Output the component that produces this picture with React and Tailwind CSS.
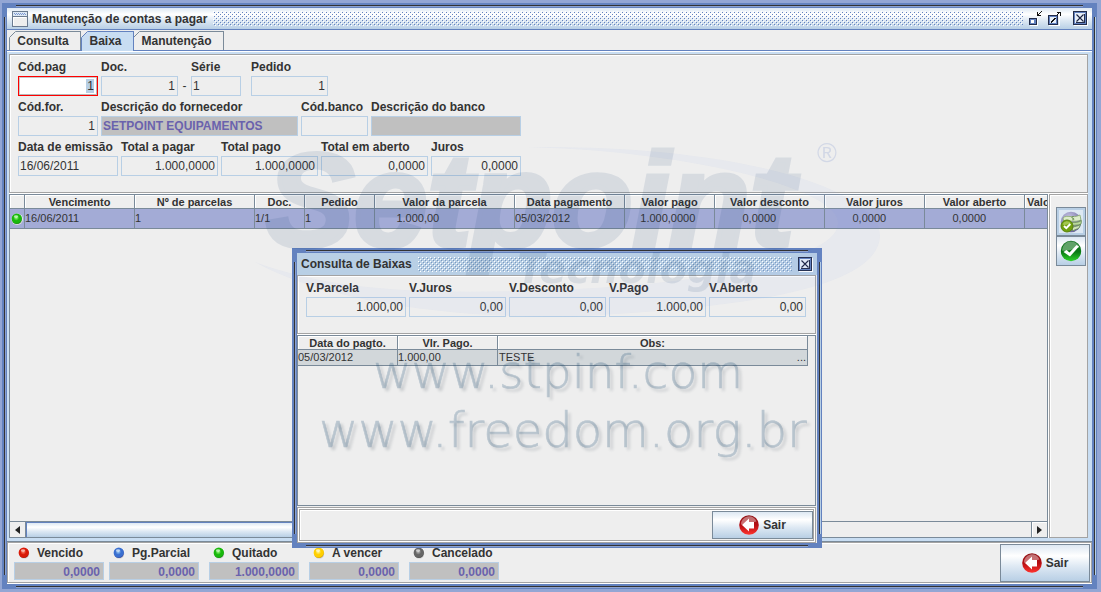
import { useId } from "react";

const OCEAN =
  "bg-[linear-gradient(to_bottom,#dde8f3_0%,#ffffff_30%,#dde8f3_60%,#b8cfe5_100%)]";

function Frame({ className = "", children }) {
  return (
    <div className={"relative flex flex-col bg-[#6382bf] p-[5px] " + className}>
      <span className="absolute top-0.5 right-3.5 left-3.5 h-px bg-[#333333] shadow-[0_1px_#8ea3cf]" />
      <span className="absolute right-3.5 bottom-0.5 left-3.5 h-px bg-[#333333] shadow-[0_1px_#8ea3cf]" />
      <span className="absolute top-3.5 bottom-3.5 left-0.5 w-px bg-[#333333] shadow-[1px_0_#8ea3cf]" />
      <span className="absolute top-3.5 right-0.5 bottom-3.5 w-px bg-[#333333] shadow-[1px_0_#b8cfe5]" />
      {children}
    </div>
  );
}

function Bumps({ dark, light }) {
  const id = useId();
  return (
    <svg className="h-[15px] min-w-0 flex-1" shapeRendering="crispEdges" aria-hidden="true">
      <defs>
        <pattern id={id} width="4" height="4" patternUnits="userSpaceOnUse">
          <rect x="0" y="0" width="1" height="1" fill={light} />
          <rect x="2" y="2" width="1" height="1" fill={light} />
          <rect x="1" y="1" width="1" height="1" fill={dark} />
          <rect x="3" y="3" width="1" height="1" fill={dark} />
        </pattern>
      </defs>
      <rect width="100%" height="100%" fill={`url(#${id})`} />
    </svg>
  );
}

function CloseIcon() {
  return (
    <svg width="15" height="15" viewBox="0 0 15 15" shapeRendering="crispEdges">
      <path d="M1 14.5H14.5V1" fill="none" stroke="#fff" />
      <rect x="0.5" y="0.5" width="13" height="13" fill="none" stroke="#222c4a" />
      <rect x="1.5" y="1.5" width="11" height="11" fill="#e6eef8" stroke="#6382bf" />
      <path d="M3 11.5H11.5V3" fill="none" stroke="#222c4a" />
      <path d="M3.500 3.500L10.500 10.500M10.500 3.500L3.500 10.500" stroke="#1b2340" strokeWidth="1.1" shapeRendering="auto" />
    </svg>
  );
}

function MinimizeIcon() {
  return (
    <svg width="15" height="15" viewBox="0 0 15 15" shapeRendering="crispEdges">
      <path d="M1 14.5H8.5V7" fill="none" stroke="#fff" />
      <rect x="0" y="7" width="8" height="7" fill="#222c4a" />
      <rect x="1" y="8" width="6" height="5" fill="#6382bf" />
      <rect x="2" y="9" width="3" height="3" fill="#fff" />
      <path d="M8.500 1V4.500H12" fill="none" stroke="#111" />
      <path d="M9 4L13 0" stroke="#111" />
    </svg>
  );
}

function MaximizeIcon() {
  return (
    <svg width="15" height="15" viewBox="0 0 15 15" shapeRendering="crispEdges">
      <path d="M1 14.5H11.5V4" fill="none" stroke="#fff" />
      <rect x="0.5" y="4.5" width="9" height="9" fill="#e6eef8" stroke="#222c4a" />
      <rect x="1.5" y="5.5" width="7" height="7" fill="none" stroke="#6382bf" />
      <path d="M3 11.500L7.500 7M9 4L12 1" stroke="#111" />
      <path d="M9 1.500H12.500V5" fill="none" stroke="#111" />
    </svg>
  );
}

function WindowIcon() {
  return (
    <svg width="16" height="16" viewBox="0 0 16 16" shapeRendering="crispEdges" aria-hidden="true">
      <rect x="0.5" y="0.5" width="15" height="15" rx="1" fill="#eeeeee" stroke="#6b7b90" />
      <rect x="1" y="1" width="14" height="4" fill="#dde8f3" />
      <path d="M2 2.5H14M3 3.5H14" stroke="#7c98d4" strokeDasharray="1 1" />
      <path d="M1 5.5H15" stroke="#6b7b90" />
      <path d="M1.5 14V6.5H14" fill="none" stroke="#fff" />
    </svg>
  );
}

function ExitIcon() {
  const id = useId();
  return (
    <svg width="20" height="20" viewBox="0 0 20 20" aria-hidden="true">
      <defs>
        <linearGradient id={id} x1="0" y1="0" x2="0" y2="1">
          <stop offset="0" stopColor="#8e1519" />
          <stop offset="0.5" stopColor="#b50d12" />
          <stop offset="1" stopColor="#ff3530" />
        </linearGradient>
      </defs>
      <circle cx="10" cy="10" r="9.8" fill={`url(#${id})`} />
      <path d="M2 9.5A8 8 0 0 1 17.5 6.5C12 7 8 10.500 2 9.500Z" fill="#fff" opacity="0.4" />
      <path d="M3 10L10 3.500V7H15V13.500H10V16.500Z" fill="#fff" />
    </svg>
  );
}

function CheckIcon() {
  const id = useId();
  return (
    <svg width="22" height="22" viewBox="0 0 22 22" aria-hidden="true">
      <defs>
        <linearGradient id={id} x1="0" y1="0" x2="0" y2="1">
          <stop offset="0" stopColor="#0b6b1b" />
          <stop offset="0.55" stopColor="#0a7a14" />
          <stop offset="1" stopColor="#2fd42a" />
        </linearGradient>
      </defs>
      <circle cx="11" cy="11" r="10.200" fill={`url(#${id})`} />
      <path d="M2 10.500A9 9 0 0 1 19.500 7.500C13 8 9 12 2 10.500Z" fill="#fff" opacity="0.35" />
      <path d="M3.500 12L6.500 10L9.500 12.500L16.500 5L19 6.500L10 16.500Z" fill="#fff" />
    </svg>
  );
}

function MoneyIcon() {
  const id = useId();
  return (
    <svg width="22" height="22" viewBox="0 0 22 22" aria-hidden="true">
      <defs>
        <radialGradient id={id} cx="0.4" cy="0.3" r="0.8">
          <stop offset="0" stopColor="#c9c7e6" />
          <stop offset="1" stopColor="#5f5b94" />
        </radialGradient>
      </defs>
      <circle cx="11" cy="11" r="10.300" fill={`url(#${id})`} />
      <path d="M3 7C7 3 12 8 20 4L21 9C14 12 9 8 4 12Z" fill="#dcecc9" stroke="#7da05e" strokeWidth="0.700" />
      <path d="M9 13C13 10 16 13 21.500 9.500L21 13C17 15 14 13 11 16Z" fill="#b9d79c" stroke="#5f8846" strokeWidth="0.700" />
      <path d="M12 17C15 14.500 17 16 20.500 13.500L19 17C17 18.500 15 18 13 20Z" fill="#cfe2ba" stroke="#5f8846" strokeWidth="0.700" />
      <path d="M13.500 5.500C11.500 5.500 11.500 7.200 13 7.400C14.600 7.600 14.300 9 12.300 8.800" fill="none" stroke="#5f8846" />
      <circle cx="7" cy="15" r="6" fill="#6fa00e" stroke="#5a8410" />
      <path d="M2.500 13.500A4.700 4.700 0 0 1 11 12.500C8 12.500 6 15 2.500 13.500Z" fill="#c6e07a" opacity="0.6" />
      <path d="M4 15L6.300 17.200L10.300 13" fill="none" stroke="#fff" strokeWidth="2" />
    </svg>
  );
}

const BALLS = {
  red: ["#ff8a70", "#d91a08", "#7a0c04"],
  blue: ["#9fd0f5", "#3a6fd0", "#28206e"],
  green: ["#9dff80", "#19b80c", "#07560a"],
  yellow: ["#fff9a0", "#ffcf00", "#a87300"],
  gray: ["#bdbdbd", "#666666", "#333333"],
};

function Ball({ color }) {
  const id = useId();
  const [a, b, c] = BALLS[color];
  return (
    <svg width="12" height="12" viewBox="0 0 12 12" className="shrink-0" aria-hidden="true">
      <defs>
        <radialGradient id={id} cx="0.45" cy="0.4" r="0.7">
          <stop offset="0" stopColor={a} />
          <stop offset="0.4" stopColor={b} />
          <stop offset="0.7" stopColor={b} />
          <stop offset="1" stopColor={c} />
        </radialGradient>
      </defs>
      <circle cx="6.200" cy="6.300" r="5.700" fill="#fff" />
      <circle cx="6.200" cy="6.500" r="5.300" fill="#000" opacity="0.18" />
      <circle cx="5.800" cy="5.800" r="5.200" fill={`url(#${id})`} />
      <ellipse cx="5" cy="3.500" rx="2.200" ry="1.300" fill="#fff" opacity="0.55" />
    </svg>
  );
}

const FIELD = "h-5 w-full border border-[#b8cfe5] pr-0.5 pl-px outline-none ";

function Field({ label, value = "", width, align = "text-right", kind = "plain" }) {
  const id = useId();
  const kinds = {
    plain: "bg-[#eeeeee] text-[#333333]",
    shown: "bg-[#c0c0c0] font-bold text-[#6a62ad]",
    active:
      "border-[#ff0000] bg-white bg-[linear-gradient(#b8cfe5,#b8cfe5)] bg-[length:8px_14px] bg-[position:right_3px_center] bg-no-repeat pr-[3px] text-[#333333] shadow-[inset_-1px_-1px_#b8b8b8,inset_1px_1px_#c8c8c8]",
  };
  return (
    <div className={"shrink-0 " + width}>
      <label htmlFor={id} className="block h-5 pt-px leading-5 font-bold whitespace-nowrap">
        {label}
      </label>
      <input
        id={id}
        defaultValue={value}
        readOnly={kind !== "active"}
        className={"block " + FIELD + align + " " + kinds[kind]}
      />
    </div>
  );
}

function Tab({ label, width, selected }) {
  return (
    <button
      type="button"
      role="tab"
      aria-selected={!!selected}
      className={
        "relative border-t border-r pr-1 font-bold leading-4 " +
        width +
        (selected
          ? " z-10 -mb-px h-5 border-l border-[#6382bf] bg-[#c8ddf2] pb-0.5"
          : " h-[19px] border-[#7a8a99] bg-[#eeeeee] first:border-l")
      }
    >
      <svg width="7" height="7" viewBox="0 0 7 7" className="absolute -top-px -left-px" aria-hidden="true">
        <path d="M0 0H7L0 7Z" fill="#eeeeee" />
        <path d="M0.500 6.500L6.500 0.500" stroke={selected ? "#6382bf" : "#7a8a99"} />
      </svg>
      {label}
    </button>
  );
}

const TH =
  "h-3.5 overflow-hidden border-r border-b border-[#7a8a99] bg-[#eeeeee] p-0 pt-px text-center leading-3 font-bold text-clip whitespace-nowrap shadow-[inset_1px_1px_#ffffff] ";
const TD = "overflow-hidden border-r border-b border-[#7a8a99] p-0 whitespace-pre ";

const COLUMNS = [
  ["w-[15px]", "", ""],
  ["w-[110px]", "Vencimento", "16/06/2011"],
  ["w-[120px]", "Nº de parcelas", "1"],
  ["w-[50px]", "Doc.", "1/1"],
  ["w-[70px]", "Pedido", "1"],
  ["w-[140px]", "Valor da parcela", "1.000,00".padStart(15)],
  ["w-[110px]", "Data pagamento", "05/03/2012"],
  ["w-[90px]", "Valor pago", "1.000,0000".padStart(15)],
  ["w-[110px]", "Valor desconto", "0,0000".padStart(15)],
  ["w-[100px]", "Valor juros", "0,0000".padStart(15)],
  ["w-[100px]", "Valor aberto", "0,0000".padStart(15)],
];

function PaymentsTable() {
  return (
    <table className="w-full table-fixed border-separate border-spacing-0 text-[11px]">
      <thead>
        <tr>
          {COLUMNS.map(([w, title], i) => (
            <th key={i} className={TH + w}>
              {title}
            </th>
          ))}
          <th className="h-3.5 overflow-hidden border-b border-[#7a8a99] p-0 pt-px pl-0.5 text-left leading-3 whitespace-nowrap shadow-[inset_1px_1px_#ffffff]">
            Valor cancelado
          </th>
        </tr>
      </thead>
      <tbody>
        <tr className="bg-[#a3abd6]">
          {COLUMNS.map(([, , value], i) => (
            <td key={i} className={TD + (i === 0 ? "h-5" : "h-5 pb-0.5 leading-4")}>
              {i === 0 ? (
                <span className="flex justify-center">
                  <Ball color="green" />
                </span>
              ) : (
                value
              )}
            </td>
          ))}
          <td className="border-b border-[#7a8a99] p-0" />
        </tr>
      </tbody>
    </table>
  );
}

function ScrollBar() {
  return (
    <div className="flex h-4 border-t border-[#7a8a99] bg-[#eeeeee]">
      <button type="button" aria-label="Rolar para a esquerda" className="flex w-4 items-center justify-center border-r border-[#7a8a99]">
        <svg width="5" height="8" viewBox="0 0 5 8"><path d="M5 0V8L0 4Z" fill="#222" /></svg>
      </button>
      <div className="flex-1">
        <div className={"h-full w-3/4 border-x border-t border-[#6382bf] " + OCEAN} />
      </div>
      <button type="button" aria-label="Rolar para a direita" className="flex w-4 items-center justify-center border-l border-[#7a8a99] shadow-[inset_1px_1px_#ffffff]">
        <svg width="5" height="8" viewBox="0 0 5 8"><path d="M0 0V8L5 4Z" fill="#222" /></svg>
      </button>
    </div>
  );
}

function ExitButton({ className }) {
  return (
    <button
      type="button"
      className={"flex items-center justify-center gap-1 border border-[#7a8a99] font-bold " + OCEAN + " " + className}
    >
      <ExitIcon />
      Sair
    </button>
  );
}

function Legend({ color, label, value, className = "" }) {
  const id = useId();
  return (
    <div className={"w-[90px] shrink-0 " + className}>
      <label htmlFor={id} className="flex h-[18px] items-center gap-[7px] pl-1 font-bold whitespace-nowrap">
        <Ball color={color} />
        {label}
      </label>
      <input
        id={id}
        readOnly
        defaultValue={value}
        className="block h-[18px] w-full border border-[#b8cfe5] bg-[#c0c0c0] pt-px pr-[3px] pl-px text-right font-bold text-[#6a62ad] outline-none"
      />
    </div>
  );
}

function PaymentDialog() {
  return (
    <div role="dialog" aria-label="Consulta de Baixas" className="absolute top-[248px] left-[292px] flex h-[300px] w-[530px]">
      <Frame className="flex-1">
        <div className="flex h-[22px] items-center bg-[#b8cfe5] pr-1 pl-1">
          <h2 className="mr-1.5 font-bold">Consulta de Baixas</h2>
          <Bumps dark="#7a9ac0" light="#ffffff" />
          <button type="button" aria-label="Fechar" className="ml-1.5">
            <CloseIcon />
          </button>
        </div>
        <div className="flex min-h-0 flex-1 flex-col bg-[#eeeeee] pr-px">
          <div className="flex gap-[3px] border border-[#a3a3a3] pt-px pb-4 pl-2 shadow-[inset_1px_1px_#ffffff,0_1px_#ffffff]">
            <Field label="V.Parcela" value="1.000,00" width="w-[100px]" />
            <Field label="V.Juros" value="0,00" width="w-[97px]" />
            <Field label="V.Desconto" value="0,00" width="w-[97px]" />
            <Field label="V.Pago" value="1.000,00" width="w-[97px]" />
            <Field label="V.Aberto" value="0,00" width="w-[97px]" />
          </div>
          <div className="mt-px flex-1 border border-[#7a8a99] pr-[7px]">
            <table className="w-full table-fixed border-separate border-spacing-0 text-[11px]">
              <thead>
                <tr>
                  <th className={TH + "w-[100px]"}>Data do pagto.</th>
                  <th className={TH + "w-[100px]"}>Vlr. Pago.</th>
                  <th className={TH}>Obs:</th>
                </tr>
              </thead>
              <tbody>
                <tr className="bg-[#d2d7da]">
                  <td className={TD + "h-4 leading-[15px]"}>05/03/2012</td>
                  <td className={TD + "h-4 leading-[15px]"}>1.000,00</td>
                  <td className={TD + "h-4 leading-[15px]"}>
                    <span className="flex justify-between pr-px pl-px">
                      <span>TESTE</span>
                      <span>...</span>
                    </span>
                  </td>
                </tr>
              </tbody>
            </table>
          </div>
          <div className="mt-px border border-[#a3a3a3] bg-white p-px">
            <div className="flex justify-end border border-[#a3a3a3] bg-[#eeeeee] py-px shadow-[inset_1px_1px_#ffffff]">
              <ExitButton className="h-7 w-[101px]" />
            </div>
          </div>
        </div>
      </Frame>
    </div>
  );
}

function Watermark() {
  return (
    <svg
      width="640"
      height="340"
      viewBox="250 130 640 340"
      className="pointer-events-none absolute top-[130px] left-[250px]"
      aria-hidden="true"
    >
      <defs>
        <filter id="soft" x="-5%" y="-20%" width="110%" height="140%">
          <feGaussianBlur stdDeviation="1.500" />
        </filter>
      </defs>
      <path
        d="M255 262C330 305 480 322 600 315C760 306 880 285 880 235C880 195 760 145 528 147C700 152 836 190 838 222C840 260 700 285 550 290C420 295 330 290 255 262Z"
        fill="#7896f0"
        opacity="0.06"
      />
      <g opacity="0.1">
        <text
          x="266"
          y="246"
          fontFamily="'Liberation Sans', Arial, sans-serif"
          fontSize="132"
          fontWeight="700"
          fontStyle="italic"
          fill="#143c6e"
          stroke="#143c6e"
          strokeWidth="5"
        >
          Setpoint
        </text>
      </g>
      <text
        x="517"
        y="283"
        fontFamily="'DejaVu Sans', sans-serif"
        fontSize="40"
        fontWeight="700"
        fontStyle="italic"
        fill="#143c6e"
        opacity="0.1"
      >
        Tecnologia
      </text>
      <text x="817" y="162" fontFamily="'Liberation Sans', sans-serif" fontSize="27" fill="#5070c0" opacity="0.17">
        ®
      </text>
      <g fontFamily="'DejaVu Sans Light', 'DejaVu Sans', sans-serif" fontWeight="200">
        <g fill="#203040" opacity="0.2" filter="url(#soft)">
          <text x="376" y="391" fontSize="47">www.stpinf.com</text>
          <text x="322" y="450" fontSize="48">www.freedom.org.br</text>
        </g>
        <g fill="#14466e" stroke="#14466e" strokeWidth="0.6" opacity="0.23">
          <text x="373" y="388" fontSize="47">www.stpinf.com</text>
          <text x="319" y="447" fontSize="48">www.freedom.org.br</text>
        </g>
      </g>
    </svg>
  );
}

export default function App() {
  return (
    <main className="relative flex min-h-screen overflow-hidden bg-[#93a6d4] pt-[3px] pr-1 pb-[3px] pl-0.5 font-['Liberation_Sans',Arial,sans-serif] text-xs text-[#333333]">
      <Frame className="min-w-0 flex-1">
        <div className={"flex h-[22px] items-center border-b border-[#6382bf] pr-1 pl-[5px] " + OCEAN}>
          <WindowIcon />
          <h1 className="mr-1.5 ml-1 font-bold">Manutenção de contas a pagar</h1>
          <Bumps dark="#6382bf" light="#ffffff" />
          <button type="button" aria-label="Minimizar" className="ml-1.5">
            <MinimizeIcon />
          </button>
          <button type="button" aria-label="Maximizar" className="ml-1">
            <MaximizeIcon />
          </button>
          <button type="button" aria-label="Fechar" className="ml-2.5">
            <CloseIcon />
          </button>
        </div>

        <div role="tablist" className="flex h-[21px] items-end border-b border-[#6382bf] bg-[#eeeeee] pl-0.5">
          <Tab label="Consulta" width="w-[72px]" />
          <Tab label="Baixa" width="w-[53px]" selected />
          <Tab label="Manutenção" width="w-[90px]" />
        </div>

        <div role="tabpanel" className="flex flex-1 flex-col border-t border-white bg-[#c8ddf2] pt-0.5 pr-1 pb-[3px] pl-0.5">
          <div className="border border-[#a3a3a3] bg-[#eeeeee] pt-px pb-4 pl-2 shadow-[inset_1px_1px_#ffffff]">
            <div className="flex items-end gap-[3px]">
              <Field label="Cód.pag" value="1" width="w-20" kind="active" />
              <Field label="Doc." value="1" width="w-[77px]" />
              <span className="w-[7px] text-center leading-5">-</span>
              <Field label="Série" value="1" width="w-[50px]" align="text-left" />
              <span className="w-1" />
              <Field label="Pedido" value="1" width="w-[77px]" />
            </div>
            <div className="flex gap-[3px]">
              <Field label="Cód.for." value="1" width="w-20" />
              <Field label="Descrição do fornecedor" value="SETPOINT EQUIPAMENTOS" width="w-[197px]" align="text-left" kind="shown" />
              <Field label="Cód.banco" width="w-[67px]" />
              <Field label="Descrição do banco" width="w-[150px]" align="text-left" kind="shown" />
            </div>
            <div className="flex gap-[3px]">
              <Field label="Data de emissão" value="16/06/2011" width="w-[100px]" align="text-left" />
              <Field label="Total a pagar" value="1.000,0000" width="w-[97px]" />
              <Field label="Total pago" value="1.000,0000" width="w-[97px]" />
              <Field label="Total em aberto" value="0,0000" width="w-[107px]" />
              <Field label="Juros" value="0,0000" width="w-[90px]" />
            </div>
          </div>

          <div className="flex flex-1 gap-px bg-white pt-px">
            <div className="flex min-w-0 flex-1 flex-col justify-between border border-[#7a8a99] bg-[#eeeeee]">
              <PaymentsTable />
              <ScrollBar />
            </div>
            <div className="flex w-[39px] flex-col items-center border border-[#a3a3a3] bg-[#eeeeee] pt-3 pl-1 shadow-[inset_1px_1px_#ffffff]">
              <button type="button" aria-label="Baixar parcela" className="flex h-[29px] w-[30px] items-center justify-center border border-[#7a8a99] bg-[#dde8f3] shadow-[inset_0_0_0_2px_#b8cfe5]">
                <MoneyIcon />
              </button>
              <button type="button" aria-label="Confirmar" className={"flex h-[30px] w-[30px] items-center justify-center border border-[#7a8a99] " + OCEAN}>
                <CheckIcon />
              </button>
            </div>
          </div>
        </div>

        <div className="h-[43px] border-t border-b border-t-[#7a8a99] border-b-white bg-[#eeeeee]">
          <div className="flex h-full items-start border border-[#a3a3a3] pt-px pr-px pl-1.5 shadow-[inset_1px_1px_#ffffff]">
            <Legend color="red" label="Vencido" value="0,0000" className="mr-[5px]" />
            <Legend color="blue" label="Pg.Parcial" value="0,0000" className="mr-2.5" />
            <Legend color="green" label="Quitado" value="1.000,0000" className="mr-2.5" />
            <Legend color="yellow" label="A vencer" value="0,0000" className="mr-2.5" />
            <Legend color="gray" label="Cancelado" value="0,0000" />
            <ExitButton className="ml-auto h-[38px] w-[90px]" />
          </div>
        </div>
      </Frame>
      <PaymentDialog />
      <Watermark />
    </main>
  );
}
